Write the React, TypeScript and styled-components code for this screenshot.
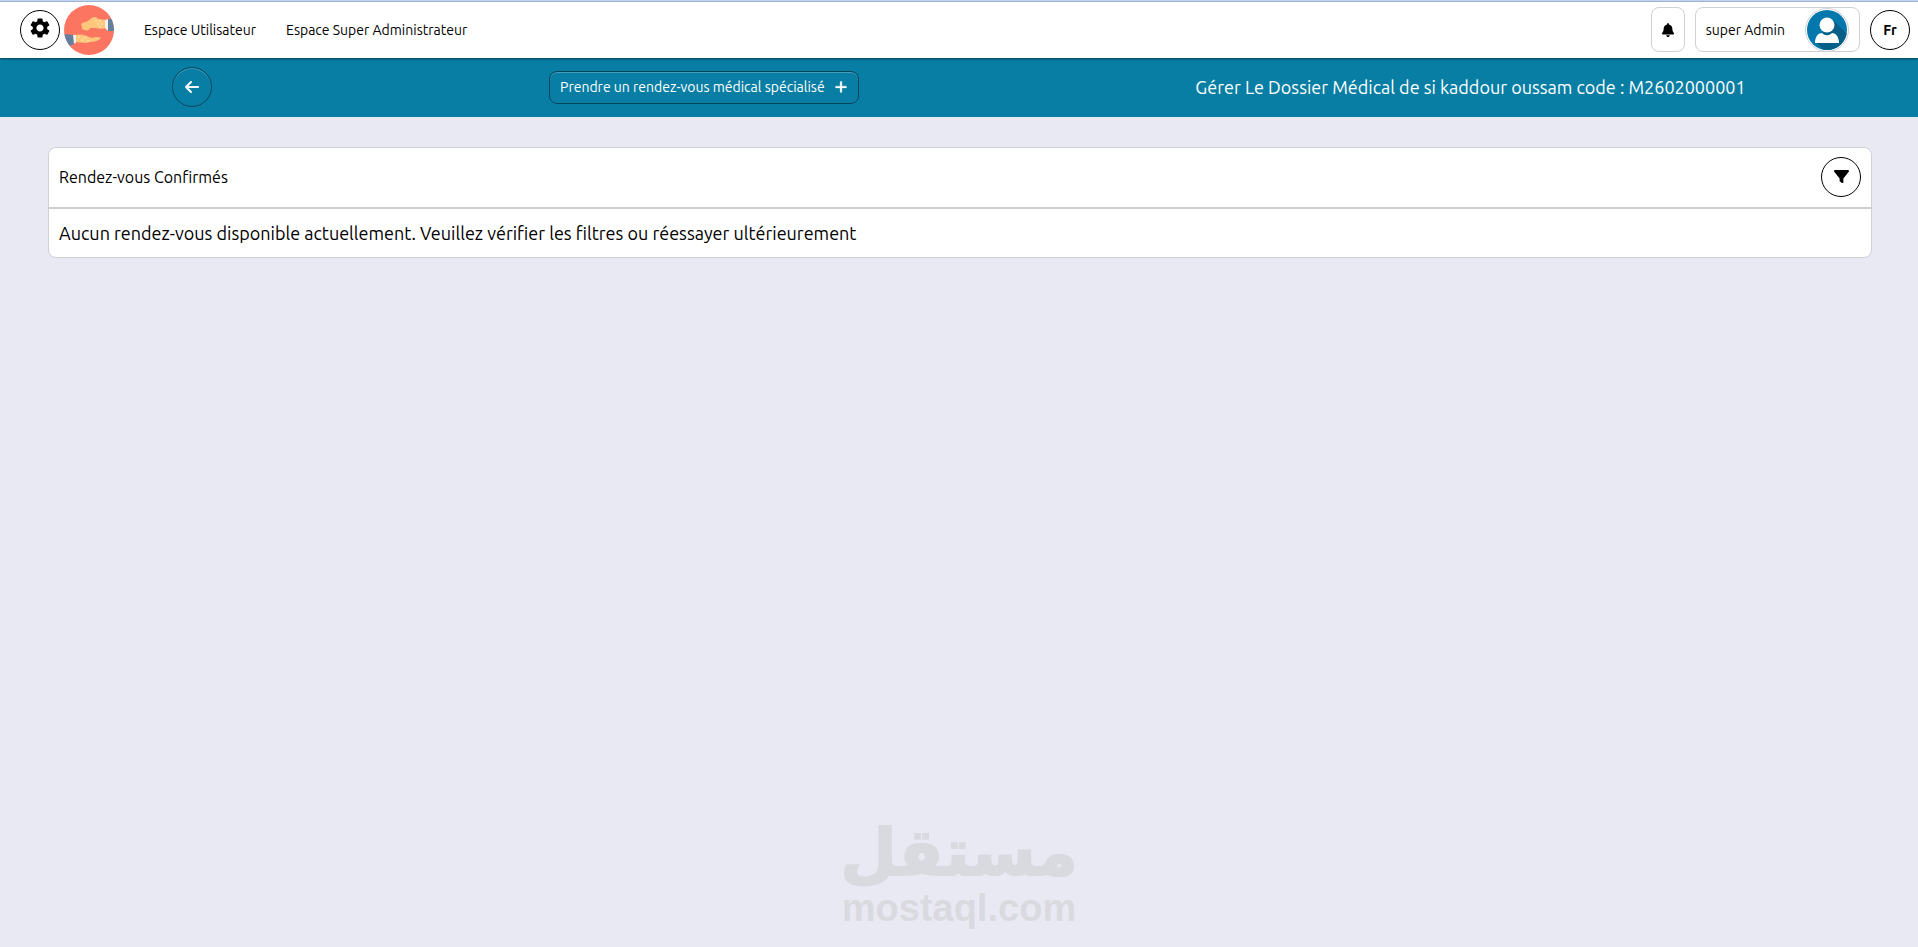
import React from "react";
import styled, { createGlobalStyle } from "styled-components";
import { MdSettings } from "react-icons/md";
import { FaArrowLeft, FaBell, FaFilter, FaPlus } from "react-icons/fa6";

const GlobalStyle = createGlobalStyle`
  *, *::before, *::after { box-sizing: border-box; }
  body {
    margin: 0;
    background: #e9e9f4;
    color: #000;
    font-family: Ubuntu, "Noto Sans", sans-serif;
    font-size: 16px;
    line-height: 24px;
  }
  button { font: inherit; color: inherit; cursor: pointer; }
`;

const Page = styled.div`
  min-height: 100vh;
  display: flex;
  flex-direction: column;
  border-top: 1px solid #c8dbf8;
`;

const Header = styled.header`
  display: flex;
  align-items: center;
  justify-content: space-between;
  height: 57px;
  padding: 0 8px 1px 20px;
  background: #fff;
  border-top: 1px solid #9fb3d3;
  box-shadow: 0 1px 2px rgba(0, 0, 0, 0.5);
  position: relative;
`;

const Group = styled.div<{ $gap: number }>`
  display: flex;
  align-items: center;
  gap: ${(p) => p.$gap}px;
`;

const RoundButton = styled.button<{ $tone?: "light" | "bar"; $lift?: number }>`
  display: inline-flex;
  align-items: center;
  justify-content: center;
  flex: none;
  width: 40px;
  height: 40px;
  padding: 0 0 ${(p) => p.$lift ?? 0}px;
  border-radius: 50%;
  border: 1px solid ${(p) => (p.$tone === "bar" ? "#06455c" : "#000")};
  background: ${(p) => (p.$tone === "bar" ? "transparent" : "#fff")};
  color: ${(p) => (p.$tone === "bar" ? "#fff" : "#000")};
  box-shadow: ${(p) => (p.$tone === "bar" ? "inset 0 1px 0 rgba(255, 255, 255, 0.25)" : "none")};
  font-size: 14px;
  font-weight: 700;
`;

const Nav = styled.nav`
  display: flex;
  gap: 30px;
  margin-left: 26px;
`;

const NavLink = styled.a`
  color: #000;
  font-size: 14px;
  text-decoration: none;
`;

const BoxButton = styled.button`
  display: flex;
  align-items: center;
  justify-content: center;
  height: 45px;
  padding: 0 9px;
  border: 1px solid #cfd0d6;
  border-radius: 8px;
  background: #fff;
  font-size: 14px;
`;

const UserButton = styled(BoxButton)`
  justify-content: space-between;
  gap: 20px;
  padding: 0 10px;
`;

const ActionBar = styled.div`
  display: flex;
  align-items: center;
  justify-content: space-around;
  min-height: 59px;
  padding: 0 4px 1px;
  background: #087ea4;
  color: #fff;
`;

const ActionButton = styled.button`
  display: flex;
  align-items: center;
  gap: 9px;
  height: 33px;
  padding: 0 10px;
  border: 1px solid #06455c;
  border-radius: 8px;
  background: transparent;
  box-shadow: inset 0 1px 0 rgba(255, 255, 255, 0.25);
  font-size: 14px;
`;

const PlusIcon = styled(FaPlus)`
  stroke: currentColor;
  stroke-width: 12px;
`;

const Title = styled.h1`
  margin: 0;
  font-size: 18px;
  font-weight: 400;
`;

const Card = styled.section`
  margin: 30px 46px 0 48px;
  border: 1px solid #cfd0d6;
  border-radius: 8px;
  background: #fff;
`;

const CardHeader = styled.div`
  display: flex;
  align-items: center;
  justify-content: space-between;
  padding: 9px 10px 10px;
  border-bottom: 2px solid #cfd0d6;
`;

const CardTitle = styled.h2`
  margin: 0;
  font-size: 16px;
  font-weight: 400;
`;

const Message = styled.p`
  margin: 0;
  padding: 12px 10px;
  font-size: 18px;
`;

const Watermark = styled.footer`
  display: flex;
  flex-direction: column;
  align-items: center;
  margin-top: auto;
  padding-bottom: 22px;
  color: #d9dae0;
  font-weight: 700;
`;

const ArabicMark = styled.span`
  font-family: "DejaVu Sans", sans-serif;
  font-size: 65px;
  line-height: 76px;
  -webkit-text-stroke: 2px #d9dae0;
`;

const LatinMark = styled.span`
  font-family: "Liberation Sans", sans-serif;
  font-size: 38px;
  line-height: 34px;
`;

const Logo = () => (
  <svg width="50" height="50" viewBox="0 0 50 50" role="img" aria-label="Logo">
    <defs>
      <clipPath id="disc"><circle cx="25" cy="25" r="25" /></clipPath>
    </defs>
    <g clipPath="url(#disc)">
      <rect width="50" height="50" fill="#fb7561" />
      <path d="M18 18c2-1 5-1 7-3 2-2 4-3 6-3s2 2 4 2l7 1v8c-3 1-7 1-10 0l-6 0c0 2-3 3-5 2-2 0-4-2-3-3-1-1-1-3 0-4z" fill="#ffc67c" />
      <path d="M31 16h2M35 16h2M33 19h2M37 19h2M35 22h2" stroke="#fff0c8" strokeWidth="1" />
      <path d="M41 15l3-1v12l-3-3z" fill="#f6f0ea" />
      <path d="M44 14l7-1v13h-7z" fill="#64809c" />
      <path d="M12 30c4-1 8 0 11 1 3 2 6 2 9 1 2 0 4 0 5 1-3 3-7 4-11 4-5 2-9 0-14 0z" fill="#ffc67c" />
      <path d="M14 32h2M17 35h2M20 33h2M23 36h2" stroke="#fff0c8" strokeWidth="1" />
      <path d="M8 30h4v8l-4 1z" fill="#f6f0ea" />
      <path d="M0 29l9 1 1 9-6 3z" fill="#64809c" />
    </g>
  </svg>
);

const Avatar = () => (
  <svg width="44" height="44" viewBox="0 0 44 44" role="img" aria-label="Avatar">
    <defs>
      <clipPath id="avatar-disc"><circle cx="22" cy="22" r="20" /></clipPath>
    </defs>
    <circle cx="22" cy="22" r="21.5" fill="#fff" stroke="#cfd0d6" />
    <g clipPath="url(#avatar-disc)">
      <rect width="44" height="44" fill="#0478ad" />
      <path d="M28 12L44 28V44H20L11 34z" fill="#055f87" />
      <circle cx="22" cy="17" r="7.5" fill="#fff" />
      <path d="M10 35c0-6 3-10 7-10 3 3 7 3 10 0 4 0 7 4 7 10z" fill="#fff" />
    </g>
  </svg>
);

export default function App() {
  return (
    <>
      <GlobalStyle />
      <Page>
        <Header>
          <Group $gap={4}>
            <RoundButton $lift={4} aria-label="Paramètres"><MdSettings size={24} /></RoundButton>
            <Logo />
            <Nav>
              <NavLink href="#">Espace Utilisateur</NavLink>
              <NavLink href="#">Espace Super Administrateur</NavLink>
            </Nav>
          </Group>
          <Group $gap={10}>
            <BoxButton aria-label="Notifications"><FaBell size={14} /></BoxButton>
            <UserButton>super Admin<Avatar /></UserButton>
            <RoundButton>Fr</RoundButton>
          </Group>
        </Header>
        <ActionBar>
          <RoundButton $tone="bar" aria-label="Retour"><FaArrowLeft size={16} /></RoundButton>
          <ActionButton>Prendre un rendez-vous médical spécialisé<PlusIcon size={14} /></ActionButton>
          <Title>Gérer Le Dossier Médical de si kaddour oussam code : M2602000001</Title>
        </ActionBar>
        <Card>
          <CardHeader>
            <CardTitle>Rendez-vous Confirmés</CardTitle>
            <RoundButton $lift={2} aria-label="Filtrer"><FaFilter size={15} /></RoundButton>
          </CardHeader>
          <Message>
            Aucun rendez-vous disponible actuellement. Veuillez vérifier les filtres ou réessayer ultérieurement
          </Message>
        </Card>
        <Watermark>
          <ArabicMark lang="ar">مستقل</ArabicMark>
          <LatinMark>mostaql.com</LatinMark>
        </Watermark>
      </Page>
    </>
  );
}
